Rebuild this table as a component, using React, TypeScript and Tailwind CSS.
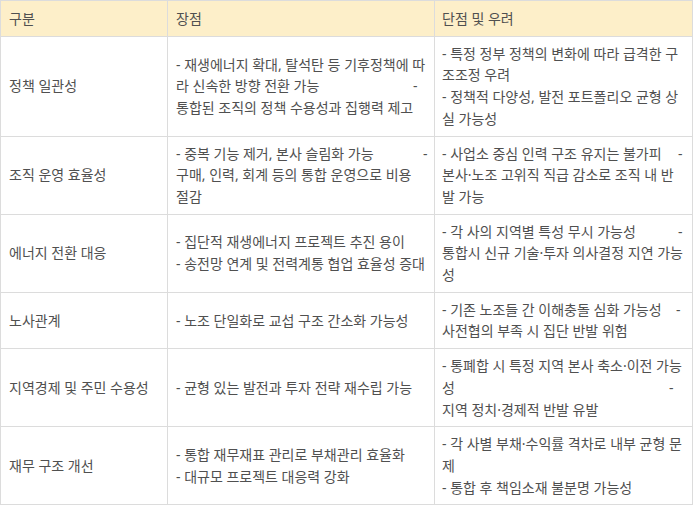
const rows: { label: string; pros: Line[]; cons: Line[] }[] = [
  {
    label: "정책 일관성",
    pros: [
      { text: "- 재생에너지 확대, 탈석탄 등 기후정책에 따" },
      { text: "라 신속한 방향 전환 가능", dash: 412 },
      { text: "통합된 조직의 정책 수용성과 집행력 제고" },
    ],
    cons: [
      { text: "- 특정 정부 정책의 변화에 따라 급격한 구" },
      { text: "조조정 우려" },
      { text: "- 정책적 다양성, 발전 포트폴리오 균형 상" },
      { text: "실 가능성" },
    ],
  },
  {
    label: "조직 운영 효율성",
    pros: [
      { text: "- 중복 기능 제거, 본사 슬림화 가능", dash: 422 },
      { text: "구매, 인력, 회계 등의 통합 운영으로 비용" },
      { text: "절감" },
    ],
    cons: [
      { text: "- 사업소 중심 인력 구조 유지는 불가피", dash: 677 },
      { text: "본사·노조 고위직 직급 감소로 조직 내 반" },
      { text: "발 가능" },
    ],
  },
  {
    label: "에너지 전환 대응",
    pros: [
      { text: "- 집단적 재생에너지 프로젝트 추진 용이" },
      { text: "- 송전망 연계 및 전력계통 협업 효율성 증대" },
    ],
    cons: [
      { text: "- 각 사의 지역별 특성 무시 가능성", dash: 677 },
      { text: "통합시 신규 기술·투자 의사결정 지연 가능" },
      { text: "성" },
    ],
  },
  {
    label: "노사관계",
    pros: [{ text: "- 노조 단일화로 교섭 구조 간소화 가능성" }],
    cons: [
      { text: "- 기존 노조들 간 이해충돌 심화 가능성", dash: 675 },
      { text: "사전협의 부족 시 집단 반발 위험" },
    ],
  },
  {
    label: "지역경제 및 주민 수용성",
    pros: [{ text: "- 균형 있는 발전과 투자 전략 재수립 가능" }],
    cons: [
      { text: "- 통폐합 시 특정 지역 본사 축소·이전 가능" },
      { text: "성", dash: 668 },
      { text: "지역 정치·경제적 반발 유발" },
    ],
  },
  {
    label: "재무 구조 개선",
    pros: [
      { text: "- 통합 재무재표 관리로 부채관리 효율화" },
      { text: "- 대규모 프로젝트 대응력 강화" },
    ],
    cons: [
      { text: "- 각 사별 부채·수익률 격차로 내부 균형 문" },
      { text: "제" },
      { text: "- 통합 후 책임소재 불분명 가능성" },
    ],
  },
];

interface Line {
  text: string;
  // absolute page x of a trailing "-" left over from the source text
  dash?: number;
}

function Lines({ lines, left }: { lines: Line[]; left: number }) {
  return (
    <div>
      {lines.map((line, i) => (
        <div key={i} className="relative whitespace-nowrap">
          {line.text}
          {line.dash !== undefined && (
            <span className="absolute top-0" style={{ left: line.dash - left }}>
              -
            </span>
          )}
        </div>
      ))}
    </div>
  );
}

export default function App() {
  return (
    <div
      className="h-[506px] w-[693px] bg-white text-[14px] leading-[21.7px] text-[#505050]"
      style={{ fontFamily: '"Noto Sans", "Noto Sans CJK KR", sans-serif' }}
    >
      <table className="w-[692px] table-fixed border-collapse">
        <colgroup>
          <col className="w-[167px]" />
          <col className="w-[267px]" />
          <col className="w-[258px]" />
        </colgroup>
        <thead>
          <tr className="bg-[#fdefc9]">
            <th className="border border-[#dcdcdc] px-[8px] py-[6.5px] text-left font-normal">구분</th>
            <th className="border border-[#dcdcdc] px-[8px] py-[6.5px] text-left font-normal">장점</th>
            <th className="border border-[#dcdcdc] px-[7px] py-[6.5px] text-left font-normal">단점 및 우려</th>
          </tr>
        </thead>
        <tbody>
          {rows.map((row) => (
            <tr key={row.label}>
              <td className="border border-[#dcdcdc] px-[8px] py-[6px] align-middle">{row.label}</td>
              <td className="border border-[#dcdcdc] px-[8px] py-[6px] align-middle">
                <Lines lines={row.pros} left={175} />
              </td>
              <td className="border border-[#dcdcdc] px-[7px] py-[6px] align-middle">
                <Lines lines={row.cons} left={441} />
              </td>
            </tr>
          ))}
        </tbody>
      </table>
    </div>
  );
}
